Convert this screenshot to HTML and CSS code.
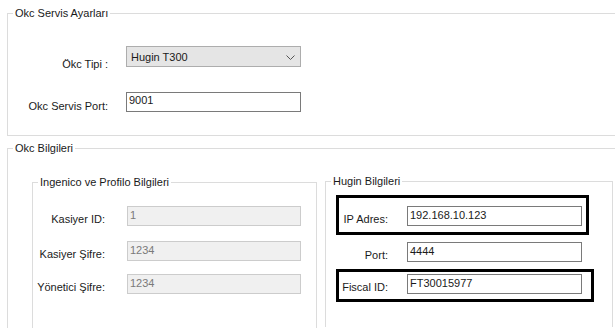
FILE: index.html
```html
<!DOCTYPE html>
<html lang="tr">

<head>
    <meta charset="UTF-8">
    <title>Okc Ayarları</title>
    <link rel="stylesheet" href="styles.css">
</head>

<body>
    <!-- servis ayarları -->
    <fieldset class="group group-service">
        <legend>Okc Servis Ayarları</legend>
        <div class="row row-type">
            <label class="label">Ökc Tipi :</label>
            <div class="combo">
                <span>Hugin T300</span>
                <svg class="chevron" width="9" height="5" viewBox="0 0 9 5">
                    <polyline points="0.5,0.5 4.5,4.5 8.5,0.5" fill="none" stroke="#555" stroke-width="1" />
                </svg>
            </div>
        </div>
        <div class="row row-port">
            <label class="label">Okc Servis Port:</label>
            <div class="field">9001</div>
        </div>
    </fieldset>

    <!-- cihaz bilgileri -->
    <fieldset class="group group-info">
        <legend>Okc Bilgileri</legend>
        <div class="columns">
            <fieldset class="group sub sub-ingenico">
                <legend>Ingenico ve Profilo Bilgileri</legend>
                <div class="row row-first">
                    <label class="label">Kasiyer ID:</label>
                    <div class="field disabled">1</div>
                </div>
                <div class="row row-second">
                    <label class="label">Kasiyer Şifre:</label>
                    <div class="field disabled">1234</div>
                </div>
                <div class="row row-third">
                    <label class="label">Yönetici Şifre:</label>
                    <div class="field disabled">1234</div>
                </div>
            </fieldset>

            <fieldset class="group sub sub-hugin">
                <legend>Hugin Bilgileri</legend>
                <div class="row row-first">
                    <label class="label">IP Adres:</label>
                    <div class="field">192.168.10.123</div>
                    <span class="mark mark-ip"></span>
                </div>
                <div class="row row-second">
                    <label class="label">Port:</label>
                    <div class="field">4444</div>
                </div>
                <div class="row row-third">
                    <label class="label">Fiscal ID:</label>
                    <div class="field">FT30015977</div>
                    <span class="mark mark-fiscal"></span>
                </div>
            </fieldset>
        </div>
    </fieldset>
</body>

</html>
```

FILE: styles.css
```css
html,
body {
    margin: 0;
    padding: 0;
    overflow: hidden;
    background: #fff;
}

body {
    width: 615px;
    height: 328px;
    font: 11px/13px "Liberation Sans", Arial, sans-serif;
    color: #1a1a1a;
}

.group {
    margin: 0;
    padding: 0;
    min-width: 0;
    border: 1px solid #dcdcdc;
}

.group legend {
    margin-left: 5px;
    padding: 0 2px;
    line-height: 14px;
}

.row {
    position: relative;
    display: flex;
    align-items: flex-start;
}

.label {
    padding-top: 7px;
    text-align: right;
}

.field {
    box-sizing: border-box;
    height: 20px;
    padding: 2px 0 0 2px;
    border: 1px solid #7a7a7a;
    background: #fff;
}

.field.disabled {
    border-color: #cccccc;
    background: #f0f0f0;
    color: #7a7a7a;
}

/* servis ayarları - sağ kenar pencerenin dışında kalıyor */
.group-service {
    margin: 6px 0 0 7px;
    width: 607px;
    padding-bottom: 22px;
    border-right: none;
}

.group-service .label {
    width: 100px;
}

.group-service .field,
.group-service .combo {
    margin-left: 18px;
    width: 175px;
}

.row-type {
    margin-top: 26px;
}

.row-type .label {
    padding-top: 12px;
}

.combo {
    box-sizing: border-box;
    height: 21px;
    padding: 4px 0 0 4px;
    border: 1px solid #adadad;
    background: #e5e5e5;
    display: flex;
    justify-content: space-between;
}

.chevron {
    margin: 4px 5px 0 0;
}

.row-port {
    margin-top: 21px;
}

.row-port .label {
    padding-top: 8px;
}

.row-port .field {
    padding-top: 1px;
}

/* cihaz bilgileri - alt ve sağ kenar görünmüyor */
.group-info {
    margin: 5px 0 0 7px;
    width: 607px;
    border-right: none;
    border-bottom: none;
}

.columns {
    display: flex;
    align-items: flex-start;
}

.sub {
    box-sizing: border-box;
    height: 153px;
    border-bottom: none;
}

.sub-ingenico {
    margin: 20px 0 0 24px;
    width: 285px;
}

.sub-ingenico .label {
    width: 72px;
}

.sub-ingenico .field {
    margin-left: 22px;
    width: 174px;
}

.sub-ingenico .row-first {
    margin-top: 17px;
}

.sub-ingenico .row-second {
    margin-top: 15px;
}

.sub-ingenico .row-third {
    margin-top: 13px;
}

.sub-hugin {
    margin: 19px 0 0 8px;
    width: 288px;
}

.sub-hugin .label {
    width: 62px;
}

.sub-hugin .field {
    margin-left: 19px;
    width: 175px;
}

.sub-hugin .row-first {
    margin-top: 18px;
}

.sub-hugin .row-second {
    margin-top: 16px;
}

.sub-hugin .row-third {
    margin-top: 12px;
}

/* elle çizilmiş işaret kutuları */
.mark {
    position: absolute;
    left: 10px;
    box-sizing: border-box;
    border: 3px solid #000;
}

.mark-ip {
    top: -11px;
    width: 253px;
    height: 40px;
}

.mark-fiscal {
    top: -5px;
    width: 258px;
    height: 33px;
}
```
